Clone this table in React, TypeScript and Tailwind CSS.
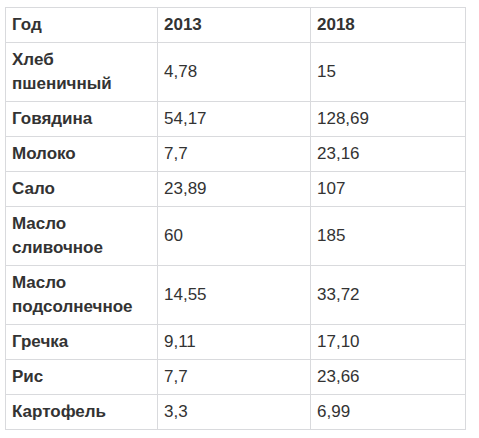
const rows: [string, string, string][] = [
  ["Хлеб пшеничный", "4,78", "15"],
  ["Говядина", "54,17", "128,69"],
  ["Молоко", "7,7", "23,16"],
  ["Сало", "23,89", "107"],
  ["Масло сливочное", "60", "185"],
  ["Масло подсолнечное", "14,55", "33,72"],
  ["Гречка", "9,11", "17,10"],
  ["Рис", "7,7", "23,66"],
  ["Картофель", "3,3", "6,99"],
];

const cell = "border border-[#d9dadd] px-[6px] py-[5px] align-middle";

export default function App() {
  return (
    <div className="min-h-[438px] bg-white pl-[5px] pt-[7px] font-['Liberation_Sans',Arial,sans-serif] text-[17px] leading-[24px] text-[#333333]">
      <table className="w-[460px] table-fixed border-collapse">
        <colgroup>
          <col className="w-[152px]" />
          <col className="w-[153px]" />
          <col className="w-[155px]" />
        </colgroup>
        <thead>
          <tr>
            <th className={`${cell} text-left font-bold`}>Год</th>
            <th className={`${cell} text-left font-bold`}>2013</th>
            <th className={`${cell} text-left font-bold`}>2018</th>
          </tr>
        </thead>
        <tbody>
          {rows.map(([name, a, b]) => (
            <tr key={name}>
              <td className={`${cell} font-bold`}>{name}</td>
              <td className={cell}>{a}</td>
              <td className={cell}>{b}</td>
            </tr>
          ))}
        </tbody>
      </table>
    </div>
  );
}
